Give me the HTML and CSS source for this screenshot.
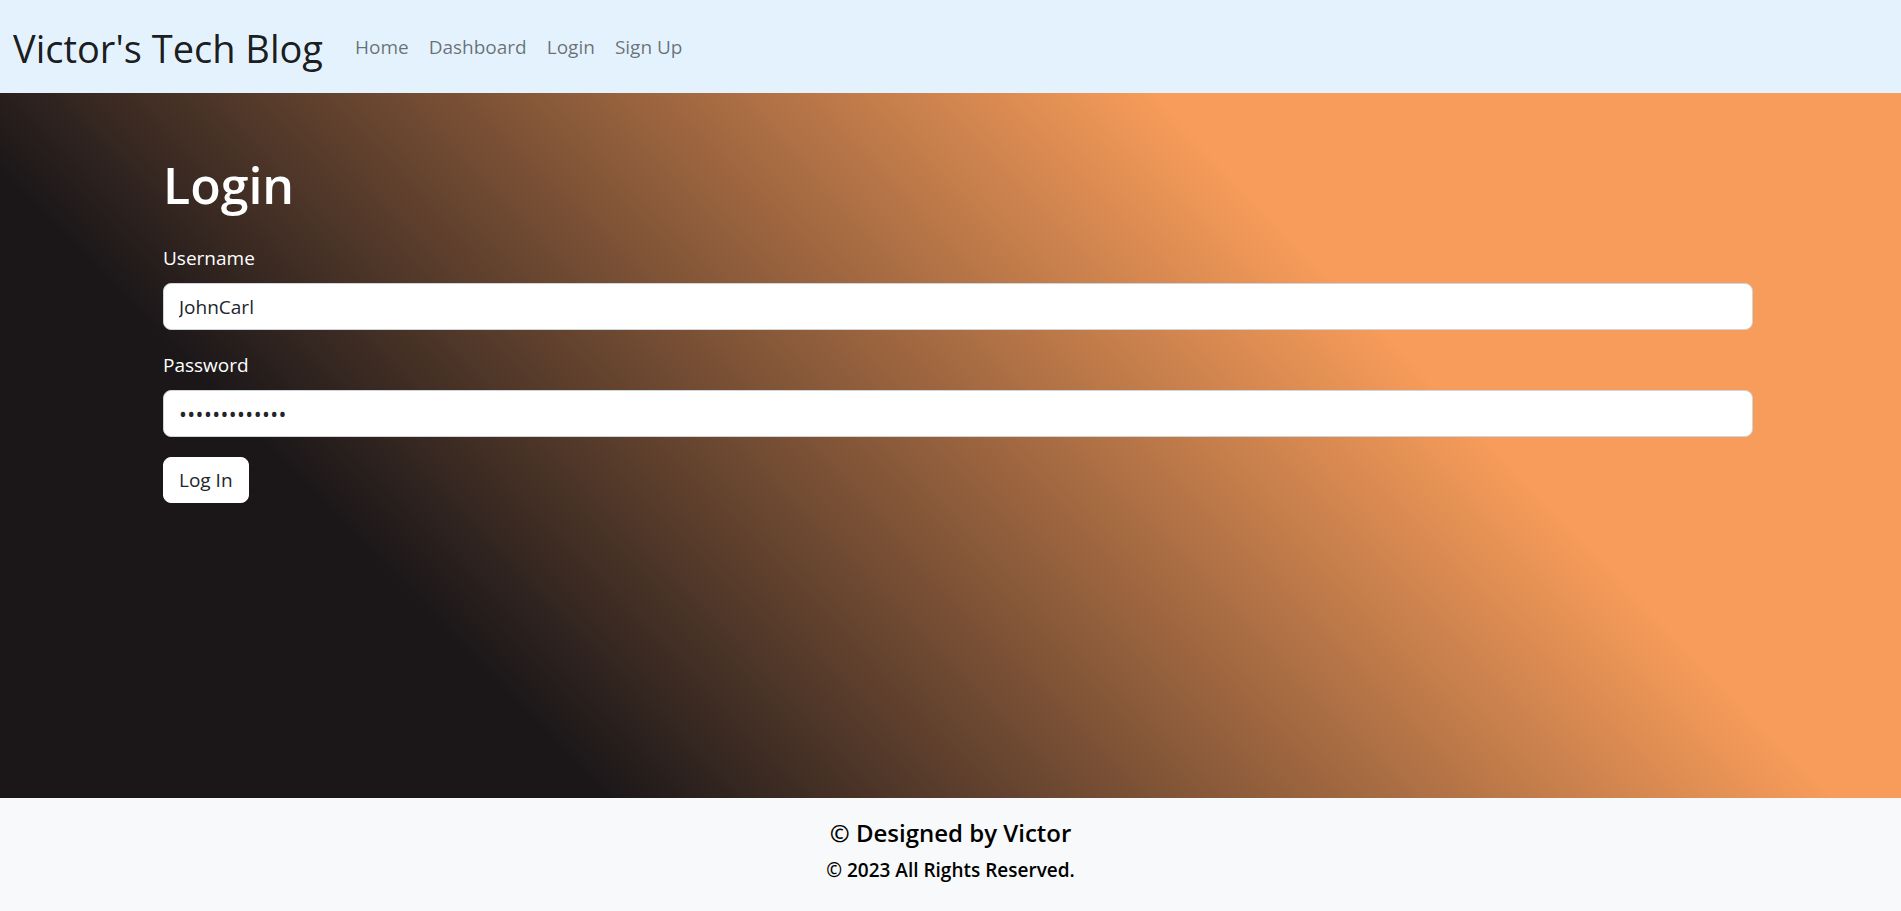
FILE: index.html
```html
<!DOCTYPE html>
<html lang="en">
<head>
<meta charset="utf-8">
<title>Victor's Tech Blog</title>
<link rel="stylesheet" href="styles.css">
</head>
<body>
<nav class="navbar">
  <a class="brand" href="#">Victor's Tech Blog</a>
  <ul class="nav-links">
    <li><a class="nav-link" href="#">Home</a></li>
    <li><a class="nav-link" href="#">Dashboard</a></li>
    <li><a class="nav-link" href="#">Login</a></li>
    <li><a class="nav-link" href="#">Sign Up</a></li>
  </ul>
</nav>
<main class="hero">
  <section class="login">
    <h1 class="login-title">Login</h1>
    <form class="login-form">
      <div class="field">
        <label class="field-label" for="username">Username</label>
        <input class="field-input" id="username" type="text" value="JohnCarl">
      </div>
      <div class="field">
        <label class="field-label" for="password">Password</label>
        <input class="field-input field-password" id="password" type="password" value="JohnCarl12345">
      </div>
      <button class="btn-login" type="button">Log In</button>
    </form>
  </section>
</main>
<footer class="footer">
  <h5 class="footer-title">© Designed by Victor</h5>
  <h6 class="footer-copy">© 2023 All Rights Reserved.</h6>
</footer>
</body>
</html>
```
FILE: styles.css
```css
* { box-sizing: border-box; }
html, body { margin: 0; padding: 0; }
body {
  font-family: "Open Sans", "Noto Sans", sans-serif;
  font-size: 20px;
  color: #212529;
  height: 911px;
  overflow: hidden;
  display: flex;
  flex-direction: column;
}
.navbar {
  height: 93px;
  background: #e3f2fd;
  display: flex;
  align-items: center;
  padding: 0 13px;
  flex-shrink: 0;
}
.brand {
  font-size: 38px;
  color: rgba(0,0,0,.9);
  text-decoration: none;
  margin-right: 22px;
  margin-top: 2px;
}
.nav-links {
  list-style: none;
  margin: 0;
  padding: 0;
  display: flex;
}
.nav-link {
  display: block;
  padding: 10px 10px;
  font-size: 19px;
  color: rgba(0,0,0,.55);
  text-decoration: none;
}
.hero {
  flex: 1;
  background: linear-gradient(46deg, #1b1719 23.5%, #f79c5a 71%);
  padding: 62px 148px 40px 163px;
}
.login-title {
  margin: 0 0 28px;
  font-size: 50px;
  line-height: 1.2;
  font-weight: 600;
  color: #fff;
}
.field { margin-bottom: 20px; }
.field-label {
  display: block;
  color: #fff;
  line-height: 30px;
  margin-bottom: 10px;
  font-size: 19px;
}
.field-input {
  display: block;
  width: 100%;
  height: 47px;
  padding: 0 15px;
  font-family: inherit;
  font-size: 19px;
  color: #212529;
  background: #fff;
  border: 1px solid #ced4da;
  border-radius: 8px;
  outline: none;
}
.field-password {
  font-size: 21px;
  letter-spacing: 0.4px;
}
.btn-login {
  height: 46px;
  padding: 0 15px;
  background: #fff;
  border: 1px solid #fff;
  border-radius: 8px;
  font-family: inherit;
  font-size: 19px;
  color: #212529;
}
.footer {
  background: #f8f9fa;
  text-align: center;
  padding: 20px 0 0;
  height: 113px;
  flex-shrink: 0;
}
.footer-title {
  margin: 0 0 10px;
  font-size: 24px;
  line-height: 30px;
  font-weight: 600;
  color: #000;
}
.footer-copy {
  margin: 0;
  font-size: 19px;
  line-height: 24px;
  font-weight: 600;
  color: #000;
}
```
